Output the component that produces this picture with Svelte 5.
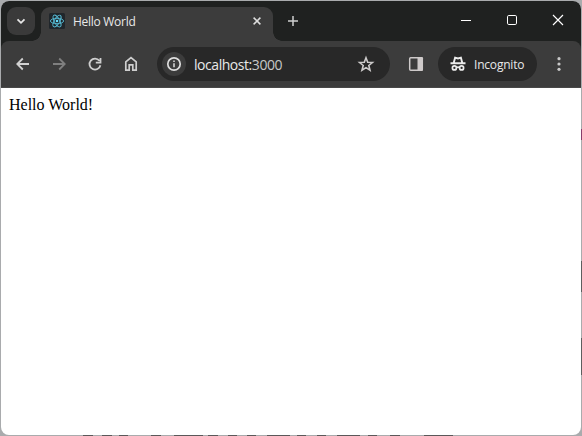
<script>
  const title = 'Hello World';
  const bottomMarks = [[83, 93], [102, 112], [119, 128], [151, 161], [174, 203], [208, 218], [228, 237], [247, 256], [267, 290], [297, 306], [317, 326], [337, 360], [368, 377], [390, 400], [424, 453]];
  const electrons = [30, 90, 150];
</script>

<div class="desktop">
  <svg class="behind" width="582" height="436" aria-hidden="true">
    {#each bottomMarks as [a, b]}
      <rect x={a} y="435" width={b - a} height="1" fill="#5a5859" />
    {/each}
    <rect x="581" y="129" width="1" height="11" fill="#873d6b" />
    <rect x="581" y="261" width="1" height="31" fill="#5d5e5f" />
    <rect x="581" y="338" width="1" height="37" fill="#5d5e5f" />
  </svg>
  <div class="window">
    <header class="strip">
      <button class="search" aria-label="Search tabs">
        <svg width="28" height="28"><path d="M10.5 12.3 14 15.8l3.5-3.5" fill="none" stroke="#e6e6e6" stroke-width="1.8" /></svg>
      </button>
      <div class="tab">
        <svg class="favicon" width="16" height="16" viewBox="0 0 16 16">
          <rect width="16" height="16" rx="1.5" fill="#20262b" />
          <g fill="none" stroke="#56bcd6" stroke-width=".9">
            {#each electrons as angle}
              <ellipse cx="8" cy="8" rx="6.6" ry="2.7" transform="rotate({angle - 30} 8 8)" />
            {/each}
          </g>
          <circle cx="8" cy="8" r="1.3" fill="#61dafb" />
        </svg>
        <span class="title">{title}</span>
        <svg class="close" width="16" height="16"><path d="m4.6 4.6 6.8 6.8m0-6.8-6.8 6.8" stroke="#dedede" stroke-width="1.5" /></svg>
      </div>
      <button class="new" aria-label="New tab">
        <svg width="20" height="20"><path d="M5 10h10M10 5v10" stroke="#cfcfcf" stroke-width="1.5" /></svg>
      </button>
      <div class="controls">
        <svg width="46" height="40"><path d="M18 19.5h10" stroke="#fff" /></svg>
        <svg width="46" height="40"><rect x="18.5" y="14.5" width="9" height="9" rx="1.3" fill="none" stroke="#fff" /></svg>
        <svg width="46" height="40"><path d="m18 14 10 10m0-10-10 10" stroke="#fff" stroke-width="1.15" /></svg>
      </div>
    </header>

    <div class="toolbar-back">
      <nav class="toolbar">
        <div class="actions">
          <svg width="36" height="36"><path d="M24 18H12.5m5.3-5.5L12.3 18l5.5 5.5" fill="none" stroke="#d2d2d2" stroke-width="1.8" /></svg>
          <svg width="36" height="36"><path d="M12 18h11.5m-5.3-5.5 5.5 5.5-5.5 5.5" fill="none" stroke="#7f7f7f" stroke-width="1.8" /></svg>
          <svg width="36" height="36"><path d="M22.4 14.7A5.5 5.5 0 1 0 23.4 19.2M23.5 12v4.6H18.8" fill="none" stroke="#cecece" stroke-width="1.8" /></svg>
          <svg width="36" height="36"><path d="M12.8 24.2v-8.4L18 11.7l5.2 4.1v8.4h-3.4v-5.4h-3.6v5.4Z" fill="none" stroke="#cecece" stroke-width="1.7" /></svg>
        </div>
        <div class="omnibox">
          <span class="info"><svg width="24" height="24"><circle cx="12" cy="12" r="6.2" fill="none" stroke="#dedede" stroke-width="1.7" /><path d="M12 11.2v4M12 8.4v1.5" stroke="#dedede" stroke-width="1.5" /></svg></span>
          <span class="url">localhost:<span>3000</span></span>
          <svg class="star" width="20" height="20"><path d="m10 3.8 1.7 4.4 4.8.3-3.7 3 1.2 4.7-4-2.6L6 16.2l1.2-4.7-3.7-3 4.8-.3Z" fill="none" stroke="#cccaca" stroke-width="1.6" /></svg>
        </div>
        <svg class="panel" width="16" height="16"><rect x="1.7" y="1.7" width="12.6" height="12.6" rx="1" fill="none" stroke="#cecaca" stroke-width="1.5" /><path d="M9.5 1h4.2q1.3 0 1.3 1.3v11.4q0 1.3-1.3 1.3H9.5Z" fill="#cecaca" /></svg>
        <div class="incognito">
          <svg width="16" height="16" viewBox="0 0 16 16"><path d="M.5 7.3h15M3.7 7 5.1 1.7l2.9.8 2.9-.8L12.3 7" fill="none" stroke="#ececec" stroke-width="1.9" /><g fill="none" stroke="#ececec" stroke-width="1.7"><circle cx="4.4" cy="11.9" r="2" /><circle cx="11.6" cy="11.9" r="2" /><path d="M6.4 11.6Q8 10.8 9.6 11.6" /></g></svg>
          <span>Incognito</span>
        </div>
        <svg class="menu" width="16" height="18" fill="#c9c9c9"><circle cx="8" cy="3.7" r="1.6" /><circle cx="8" cy="9" r="1.6" /><circle cx="8" cy="14.3" r="1.6" /></svg>
      </nav>
    </div>

    <main>Hello World!</main>
  </div>
</div>

<style>
  :global(body) { margin: 0; overflow: hidden; }
  svg { display: block; flex: none; }
  button { border: 0; padding: 0; color: inherit; background: none; }
  .desktop {
    position: relative;
    box-sizing: border-box;
    width: 582px;
    height: 436px;
    padding: 1px;
    background: #a9abad;
  }
  .behind { position: absolute; left: 0; top: 0; }
  .window {
    position: relative;
    display: flex;
    flex-direction: column;
    width: 580px;
    height: 434px;
    overflow: hidden;
    border-radius: 8px;
    background: #fff;
    font-family: "Open Sans", "Noto Sans", sans-serif;
  }
  .strip {
    display: flex;
    flex: none;
    height: 40px;
    box-sizing: border-box;
    padding: 6px 0 0 6px;
    background: #1f2120;
  }
  .search { width: 28px; height: 28px; border-radius: 9px; background: #3a3a3a; }
  .tab {
    position: relative;
    box-sizing: border-box;
    display: flex;
    align-items: center;
    width: 232px;
    height: 34px;
    margin-left: 6px;
    padding: 0 8px 6px;
    border-radius: 9px 9px 0 0;
    background: #3c3c3c;
  }
  .tab::before, .tab::after {
    content: "";
    position: absolute;
    bottom: 0;
    width: 9px;
    height: 9px;
  }
  .tab::before { left: -9px; background: radial-gradient(circle at 0 0, transparent 8.5px, #3c3c3c 9px); }
  .tab::after { right: -9px; background: radial-gradient(circle at 100% 0, transparent 8.5px, #3c3c3c 9px); }
  .title {
    flex: 1;
    margin-left: 8px;
    padding-top: 2px;
    color: #e8e8e8;
    font-size: 12px;
    line-height: 18px;
    letter-spacing: -.28px;
    white-space: nowrap;
  }
  .new { width: 20px; height: 20px; margin: 4px 0 0 10px; }
  .controls { display: flex; margin: -6px 0 0 auto; }
  .toolbar-back { flex: none; background: #1f2120; }
  .toolbar {
    display: flex;
    align-items: center;
    box-sizing: border-box;
    height: 47px;
    padding: 0 14px 1px 4px;
    border-radius: 8px 8px 0 0;
    background: linear-gradient(#484848, #484848) bottom / 100% 1px no-repeat #3c3c3c;
  }
  .actions { display: flex; }
  .omnibox {
    display: flex;
    align-items: center;
    width: 233px;
    height: 34px;
    margin-left: 8px;
    border-radius: 17px;
    background: #282828;
  }
  .info { margin-left: 5px; border-radius: 50%; background: #3c3c3c; }
  .url {
    margin-left: 8px;
    padding-top: 1px;
    color: #e9e9e9;
    font-size: 14px;
    line-height: 20px;
    letter-spacing: -.45px;
    white-space: nowrap;
  }
  .url span { color: #c7c7c7; }
  .star { margin: 0 14px 0 auto; }
  .panel { margin-left: 18px; }
  .incognito {
    display: flex;
    align-items: center;
    box-sizing: border-box;
    width: 99px;
    height: 34px;
    margin-left: 14px;
    padding-left: 12px;
    border-radius: 17px;
    background: #282828;
    color: #e8e8e8;
    font-size: 12px;
    letter-spacing: -.2px;
  }
  .incognito span { margin-left: 8px; padding-top: 1px; }
  .menu { margin-left: 14px; }
  main {
    padding: 8px;
    color: #000;
    font: 16px/18px "Liberation Serif", serif;
  }
</style>
